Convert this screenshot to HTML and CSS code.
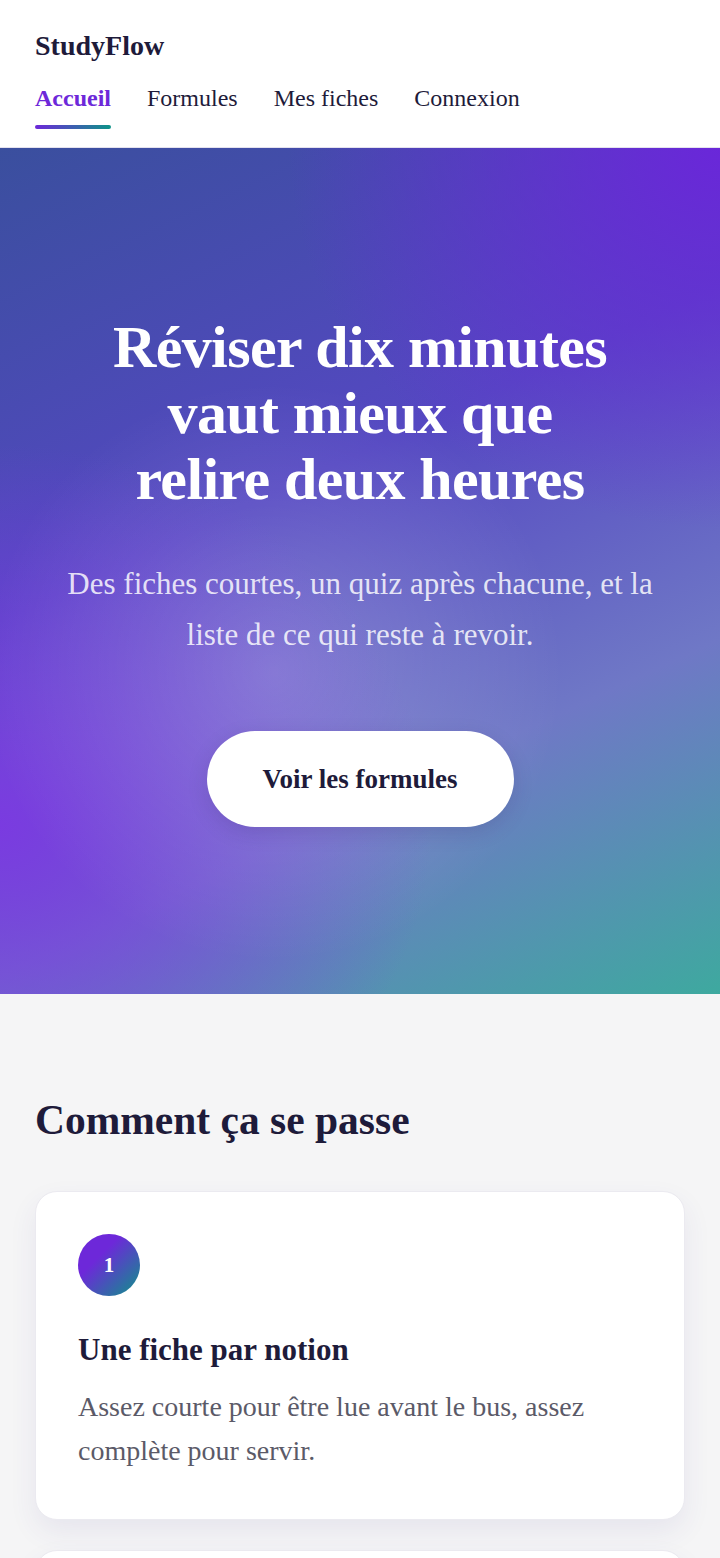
FILE: index.html
```html
<!DOCTYPE html>
<html lang="fr">
<head>
  <meta charset="utf-8">
  <title>StudyFlow</title>
  <link rel="stylesheet" href="styles.css">
</head>
<body>
  <header class="site-header">
    <div class="brand">StudyFlow</div>
    <nav class="nav">
      <a href="#" class="active">Accueil</a>
      <a href="#">Formules</a>
      <a href="#">Mes fiches</a>
      <a href="#">Connexion</a>
    </nav>
  </header>

  <section class="hero">
    <h1>Réviser dix minutes vaut mieux que relire deux heures</h1>
    <p>Des fiches courtes, un quiz après chacune, et la liste de ce qui reste à revoir.</p>
    <a href="#" class="btn">Voir les formules</a>
  </section>

  <section class="steps">
    <h2>Comment ça se passe</h2>
    <div class="card">
      <span class="num">1</span>
      <h3>Une fiche par notion</h3>
      <p>Assez courte pour être lue avant le bus, assez complète pour servir.</p>
    </div>
    <div class="card">
      <span class="num">2</span>
      <h3>Un quiz juste après</h3>
      <p>Cinq questions pour vérifier que la notion est vraiment acquise.</p>
    </div>
  </section>
</body>
</html>
```

FILE: styles.css
```css
body {
  margin: 0;
  font-family: "Liberation Serif", "Times New Roman", serif;
  color: #1e1b3a;
  background: #f5f5f6;
}
a {
  text-decoration: none;
  color: inherit;
}

.site-header {
  background: #fff;
  padding: 29px 35px 18px;
  border-bottom: 1px solid #e4e2ee;
}
.brand {
  font-size: 28px;
  line-height: 1.2;
  font-weight: bold;
}
.nav {
  display: flex;
  gap: 36px;
  margin-top: 21px;
}
.nav a {
  font-size: 24px;
  line-height: 1.2;
  color: #1e1b3a;
}
.nav a::after {
  content: "";
  display: block;
  height: 4px;
  margin-top: 13px;
  border-radius: 2px;
}
.nav a.active {
  color: #6d28d9;
  font-weight: bold;
}
.nav a.active::after {
  background: linear-gradient(90deg, #6d28d9, #0d9488);
}

.hero {
  padding: 166px 40px 167px;
  text-align: center;
  color: #fff;
  background:
    radial-gradient(circle at 38% 62%, rgba(255, 255, 255, .2), rgba(255, 255, 255, 0) 42%),
    radial-gradient(ellipse 60% 45% at 0% 80%, #7a3be0, rgba(122, 59, 224, 0) 100%),
    radial-gradient(ellipse 60% 45% at 100% 0%, #6a27d9, rgba(106, 39, 217, 0) 100%),
    linear-gradient(155deg, #3a4f9e 0%, #5548c2 40%, #6f78c6 70%, #3ea99f 100%);
}
.hero h1 {
  max-width: 520px;
  margin: 0 auto;
  font-size: 60px;
  line-height: 66px;
  letter-spacing: -0.01em;
}
.hero p {
  margin: 46px 0 71px;
  font-size: 31px;
  line-height: 51px;
  color: rgba(255, 255, 255, .84);
}
.btn {
  display: inline-block;
  padding: 30px 56px;
  border-radius: 48px;
  background: #fff;
  color: #1e1b3a;
  font-size: 27px;
  line-height: 36px;
  font-weight: bold;
  box-shadow: 0 6px 20px rgba(40, 20, 90, .15);
}

.steps {
  padding: 101px 35px 40px;
}
.steps h2 {
  margin: 0 0 46px;
  font-size: 41.5px;
  line-height: 50px;
}
.card {
  background: #fff;
  border: 1px solid #ebeaf0;
  border-radius: 22px;
  padding: 42px 42px 46px;
  margin-bottom: 30px;
  box-shadow: 0 12px 28px rgba(70, 50, 140, .08);
}
.num {
  display: flex;
  align-items: center;
  justify-content: center;
  width: 62px;
  height: 62px;
  border-radius: 50%;
  background: linear-gradient(135deg, #6d28d9 35%, #0d9488);
  color: #fff;
  font-size: 21px;
  font-weight: bold;
}
.card h3 {
  margin: 36px 0 17px;
  font-size: 31px;
  line-height: 36px;
}
.card p {
  margin: 0;
  font-size: 28px;
  line-height: 44px;
  color: #5b5a68;
}
```
